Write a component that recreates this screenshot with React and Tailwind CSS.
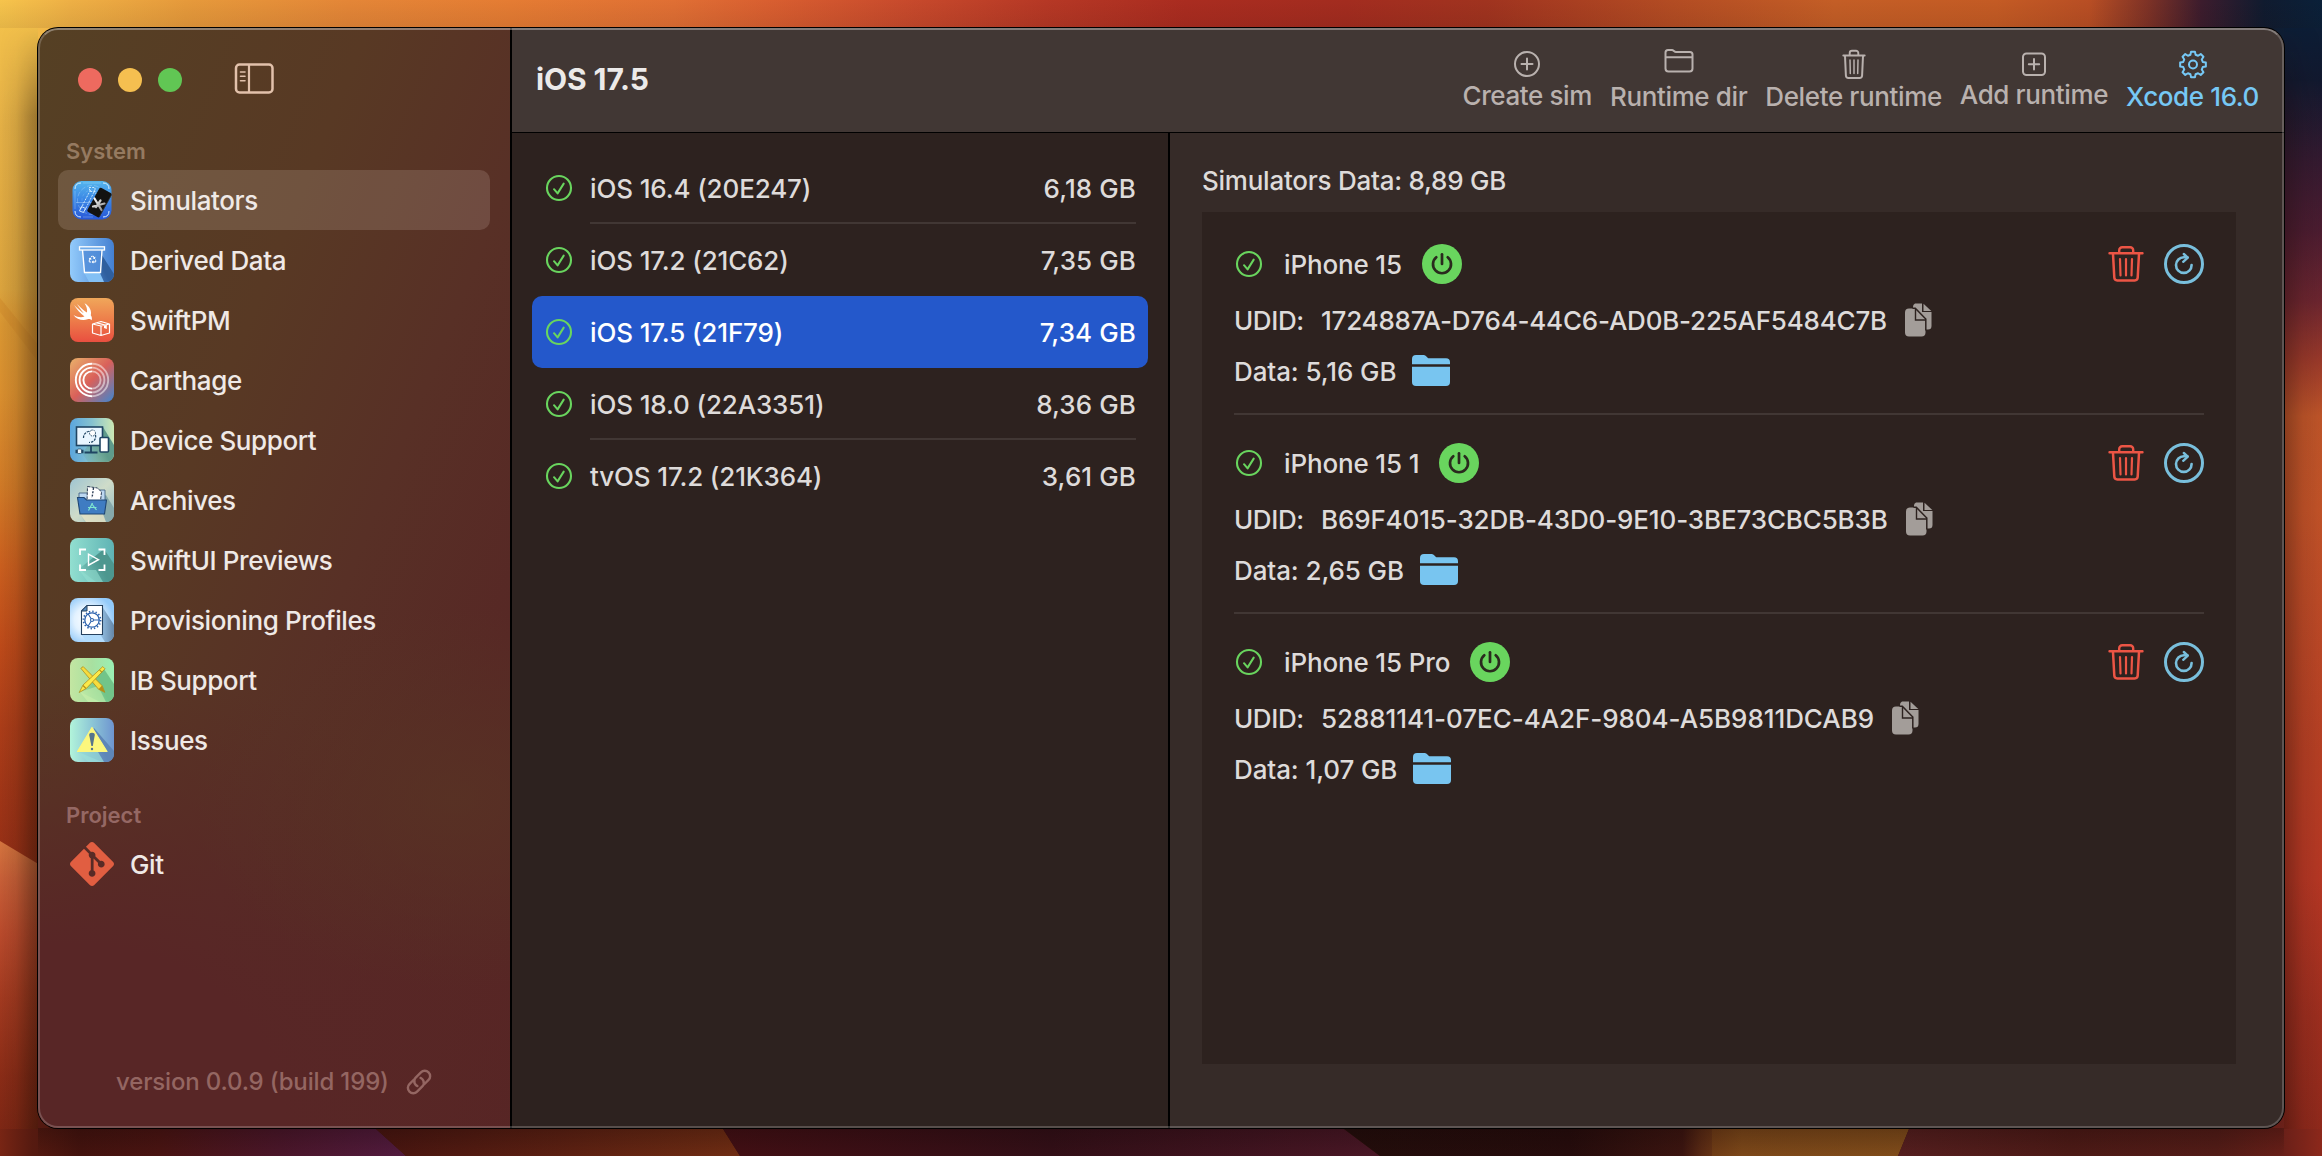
import React from "react";
import { FaRecycle } from "react-icons/fa";
import { SiGit } from "react-icons/si";

/* ---------- Desktop wallpaper ---------- */

function Stops({ list }) {
  return list.map(([o, c, a]) => <stop key={o} offset={o} stopColor={c} stopOpacity={a ?? 1} />);
}

function Wallpaper() {
  return (
    <svg className="absolute inset-0 h-full w-full" viewBox="0 0 2322 1156" preserveAspectRatio="none" aria-hidden="true">
      <defs>
        <linearGradient id="wTop" gradientUnits="userSpaceOnUse" x1="0" y1="0" x2="2322" y2="0">
          <Stops
            list={[
              [0, "#f6c44c"], [0.03, "#eeb045"], [0.08, "#e69a3b"], [0.15, "#e48637"], [0.22, "#e57c33"],
              [0.29, "#e06f34"], [0.33, "#d95f30"], [0.39, "#c84a2c"], [0.45, "#b63825"], [0.51, "#aa2c20"],
              [0.58, "#a32c1f"], [0.64, "#a0331f"], [0.72, "#b34c23"], [0.79, "#c45e26"], [0.86, "#c45b24"],
              [0.9, "#b84e24"], [0.925, "#7e3226"], [0.948, "#3c1c2d"], [0.975, "#101b2f"], [1, "#0a2039"],
            ]}
          />
        </linearGradient>
        <linearGradient id="wLeft" gradientUnits="userSpaceOnUse" x1="0" y1="0" x2="0" y2="1156">
          <Stops
            list={[
              [0, "#f6c44c"], [0.11, "#e4b046"], [0.25, "#dba43e"], [0.28, "#d99632"], [0.34, "#d98f2f"],
              [0.42, "#d07a27"], [0.49, "#ca5f1f"], [0.56, "#bd4a1a"], [0.63, "#ab3d19"], [0.74, "#962f16"], [1, "#6a2110"],
            ]}
          />
        </linearGradient>
        <linearGradient id="wLeftLow" gradientUnits="userSpaceOnUse" x1="0" y1="840" x2="0" y2="1156">
          <Stops list={[[0, "#d5763f"], [0.12, "#c86038"], [0.3, "#b94a2c"], [0.5, "#a23a20"], [0.75, "#8a2c17"], [1, "#782514"]]} />
        </linearGradient>
        <linearGradient id="wLeftShade" x1="0" y1="0" x2="1" y2="0">
          <Stops list={[[0, "#1a0d04", 0], [0.4, "#1a0d04", 0.12], [0.75, "#1a0d04", 0.36], [1, "#1a0d04", 0.5]]} />
        </linearGradient>
        <linearGradient id="wShadeFade" x1="0" y1="0" x2="0" y2="1">
          <Stops list={[[0, "#fff", 0], [0.02, "#fff", 0], [0.1, "#fff", 0.8], [1, "#fff", 1]]} />
        </linearGradient>
        <mask id="wShadeMask">
          <rect width="2322" height="1156" fill="url(#wShadeFade)" />
        </mask>
        <linearGradient id="wRight" gradientUnits="userSpaceOnUse" x1="0" y1="0" x2="0" y2="1156">
          <Stops
            list={[
              [0, "#0a2039"], [0.07, "#12192f"], [0.14, "#341a30"], [0.2, "#4b1c30"], [0.26, "#6b252f"], [0.31, "#97382a"],
              [0.36, "#bd5429"], [0.44, "#c05228"], [0.52, "#bb4a27"], [0.65, "#b53f24"], [0.76, "#b53724"], [0.88, "#9c2e1f"], [1, "#8c281b"],
            ]}
          />
        </linearGradient>
        <linearGradient id="wRightShade" x1="1" y1="0" x2="0" y2="0">
          <Stops list={[[0, "#160805", 0], [0.5, "#160805", 0.1], [1, "#160805", 0.36]]} />
        </linearGradient>
        <linearGradient id="wB1" gradientUnits="userSpaceOnUse" x1="0" y1="0" x2="400" y2="0">
          <Stops list={[[0, "#782514"], [0.08, "#561a10"], [0.2, "#44130e"], [0.4, "#4a1412"], [0.7, "#4b162a"], [1, "#521b3e"]]} />
        </linearGradient>
        <linearGradient id="wB2" gradientUnits="userSpaceOnUse" x1="376" y1="0" x2="740" y2="0">
          <Stops list={[[0, "#481510"], [0.5, "#5c2012"], [1, "#702d13"]]} />
        </linearGradient>
        <linearGradient id="wB3" gradientUnits="userSpaceOnUse" x1="722" y1="0" x2="1380" y2="0">
          <Stops list={[[0, "#430f14"], [0.5, "#330f17"], [1, "#4a1726"]]} />
        </linearGradient>
        <linearGradient id="wB4" gradientUnits="userSpaceOnUse" x1="1345" y1="0" x2="1720" y2="0">
          <Stops list={[[0, "#230d0b"], [0.6, "#260c0c"], [0.9, "#3c1510"], [0.95, "#5a2a14"], [1, "#6f3a16"]]} />
        </linearGradient>
        <linearGradient id="wB5" gradientUnits="userSpaceOnUse" x1="1700" y1="0" x2="1910" y2="0">
          <Stops list={[[0, "#6b3815"], [0.2, "#7d4819"], [1, "#804c1a"]]} />
        </linearGradient>
        <linearGradient id="wB6" gradientUnits="userSpaceOnUse" x1="1900" y1="0" x2="2322" y2="0">
          <Stops list={[[0, "#561f1f"], [0.4, "#4d1a16"], [0.75, "#531c17"], [0.9, "#671f18"], [1, "#8c281b"]]} />
        </linearGradient>
        <linearGradient id="wBotShade" x1="0" y1="0" x2="0" y2="1">
          <Stops list={[[0, "#0c0404", 0.25], [1, "#0c0404", 0]]} />
        </linearGradient>
        <linearGradient id="wTopShade" x1="0" y1="0" x2="0" y2="1">
          <Stops list={[[0, "#1a0804", 0], [1, "#1a0804", 0.08]]} />
        </linearGradient>
      </defs>
      <rect width="60" height="1156" fill="url(#wLeft)" />
      <path d="M0 298 60 372V390L0 312Z" fill="#cf8a2b" opacity=".55" />
      <path d="M0 841 60 877V1156H0Z" fill="url(#wLeftLow)" />
      <g mask="url(#wShadeMask)">
        <rect width="40" height="1156" fill="url(#wLeftShade)" />
      </g>
      <rect x="2262" width="60" height="1156" fill="url(#wRight)" />
      <g mask="url(#wShadeMask)">
        <rect x="2284" width="38" height="1156" fill="url(#wRightShade)" />
      </g>
      <rect width="2322" height="28" fill="url(#wTop)" />
      <rect x="38" y="28" width="2246" height="24" fill="url(#wTop)" />
      <rect width="2322" height="28" fill="url(#wTopShade)" />
      <path d="M38 1110H376V1129L406 1156H0V1129H38Z" fill="url(#wB1)" />
      <path d="M376 1110H723V1129L740 1156H406L376 1129Z" fill="url(#wB2)" />
      <path d="M723 1110H1344V1129L1380 1156H740L723 1129Z" fill="url(#wB3)" />
      <path d="M1344 1110H1713V1156H1380L1344 1129Z" fill="url(#wB4)" />
      <path d="M1712 1110H1910L1909 1129 1898 1156H1712Z" fill="url(#wB5)" />
      <path d="M1909 1110H2284V1129H2322V1156H1898L1909 1129Z" fill="url(#wB6)" />
      <rect x="38" y="1128" width="2246" height="28" fill="url(#wBotShade)" />
    </svg>
  );
}

/* ---------- Sidebar icons (44 x 44 tiles) ---------- */

function Tile({ id, from, to, x2 = 1, y2 = 1, mid, shadow, shadowColor, children }) {
  return (
    <svg width="44" height="44" viewBox="0 0 44 44" aria-hidden="true">
      <defs>
        <linearGradient id={id} x1="0" y1="0" x2={x2} y2={y2}>
          <stop offset="0" stopColor={from} />
          {mid && <stop offset=".5" stopColor={mid} />}
          <stop offset="1" stopColor={to} />
        </linearGradient>
        <linearGradient id={id + "S"} x1="0" y1="1" x2="1" y2=".5">
          <stop offset="0" stopColor={shadowColor || "#000"} stopOpacity="0" />
          <stop offset=".7" stopColor={shadowColor || "#000"} stopOpacity="1" />
        </linearGradient>
        <clipPath id={id + "C"}>
          <rect width="44" height="44" rx="8" />
        </clipPath>
      </defs>
      <g clipPath={"url(#" + id + "C)"}>
        <rect width="44" height="44" fill={"url(#" + id + ")"} />
        {shadow && <path d={shadow} fill={"url(#" + id + "S)"} />}
        {children}
      </g>
    </svg>
  );
}

function SimulatorsIcon() {
  return (
    <svg width="44" height="44" viewBox="0 0 44 44" className="overflow-visible" aria-hidden="true">
      <defs>
        <linearGradient id="simBg" x1="0" y1="0" x2="0" y2="1">
          <stop offset="0" stopColor="#55b6ee" />
          <stop offset=".45" stopColor="#3c8ae6" />
          <stop offset="1" stopColor="#2858d8" />
        </linearGradient>
        <linearGradient id="simX" gradientUnits="userSpaceOnUse" x1="23" y1="21" x2="33" y2="32">
          <stop offset="0" stopColor="#fff" />
          <stop offset="1" stopColor="#8f8f8f" />
        </linearGradient>
      </defs>
      <rect x="2.5" y="3" width="39" height="38.5" rx="9" fill="url(#simBg)" />
      <g fill="none" stroke="#d9f0ff">
        <path d="M5 11q0-6 6-6M33 5q6 0 6 6M5 33q0 6 6 6M33 39q6 0 6-6" strokeWidth="1" />
        <path d="M5 13v18M13 5h18M13 39h10M39 13v5" strokeWidth=".7" opacity=".4" />
        <circle cx="22" cy="22" r="14.5" strokeWidth=".8" opacity=".35" strokeDasharray="5 2" />
        <circle cx="22" cy="22" r="10" strokeWidth=".7" opacity=".25" strokeDasharray="3 2" />
        <path d="M20.5 12 10 32M24 14 15 32M19 9.5h6v4h-5zM24 12l5 9" strokeWidth=".9" strokeDasharray="2 1.2" />
        <path d="M6 24.500h24" strokeWidth=".7" opacity=".5" />
        <path d="m11.500 28.500-2 4.500 4 1.500 2-4z" strokeWidth=".9" />
      </g>
      <g transform="rotate(29 29.500 24.500)">
        <rect x="22.500" y="10.800" width="14" height="27.500" rx="1.800" fill="#131211" />
        <path d="M36.300 12.500v24" stroke="#3b3a39" strokeWidth=".6" />
      </g>
      <path d="M24.500 20.500 31.500 32M34.500 25.500 23 28.500M30.500 22.500 26 29" stroke="url(#simX)" strokeWidth="2.200" strokeLinecap="round" />
    </svg>
  );
}

const DerivedDataIcon = () => (
  <Tile id="dd" from="#93cbfb" to="#4480d2" y2={0} shadow="M30 14 44 36V44H19L14 35H31Z" shadowColor="#2f5f9e">
    <path d="M14 35H30L34 44H19Z" fill="#83c0f5" />
    <path d="M12.500 12 14.500 34.500H30.500L32 12" fill="#4c88d6" fillOpacity=".7" stroke="#fff" strokeWidth="1.400" />
    <rect x="9.500" y="8.800" width="25" height="3.200" fill="#6fabea" stroke="#fff" strokeWidth="1.300" />
    <FaRecycle x={18.500} y={17.500} size={8} color="#fff" />
  </Tile>
);

const SwiftPMIcon = () => (
  <Tile id="sp" from="#f0a75a" mid="#ed7d4a" to="#e94f40" x2={0}>
    <path
      transform="translate(3 3)"
      d="M1 4C5 8 8.500 10.800 10.800 12.300 8 9 5.500 5.500 4 3 8 7 11.500 10 14 11.600 14.500 8.500 13.500 5 11.500 2.300 16.500 5 19 10 17.800 14.200 19 16 19.300 18 18.500 19.300 17.500 17.800 16 17.600 14.500 18.300 10 20.300 3.500 18.500.500 14 4.500 16.300 8.500 16.800 11.500 15.500 7.500 12.500 3.500 8 1 4Z"
      fill="#fff"
    />
    <g fill="none" stroke="#fff" strokeWidth="1.200" strokeLinejoin="round">
      <path d="M22.500 26 31 28V37.500L22.500 35ZM31 28 39.500 26V35L31 37.500ZM22.500 26 31 23.500 39.500 26M27 24.800 35 27" />
    </g>
    <path d="M34 27.600 36.800 27V31L34 30Z" fill="#fff" />
  </Tile>
);

const CarthageIcon = () => (
  <Tile id="ca" from="#eab16a" mid="#d9605a" to="#3f86d0">
    <g fill="none" strokeWidth="1.900">
      {[16.200, 12.400, 8.600].map((r) => (
        <React.Fragment key={r}>
          <path d={`M22 ${22 - r}A${r} ${r} 0 0 0 22 ${22 + r}`} stroke="#fff" />
          <path d={`M22 ${22 - r}A${r} ${r} 0 0 1 22 ${22 + r}`} stroke="#fff" strokeOpacity=".5" />
        </React.Fragment>
      ))}
    </g>
  </Tile>
);

const DeviceSupportIcon = () => (
  <Tile id="ds" from="#5ba6de" mid="#86c2cf" to="#cce8b4" y2={0} shadow="M33 9 44 27V44H18L12 35Z" shadowColor="#5f9b8b">
    <rect x="6.500" y="9" width="26" height="18.500" fill="#e9f6ff" stroke="#1f4563" strokeWidth="1.600" />
    <path d="M21 28v6M14.500 34.500h13" stroke="#1f4563" strokeWidth="1.800" />
    <path d="M13.500 20c0-5 4-7 8-7M25.500 17c1 4-2 7.500-6.500 7.500" fill="none" stroke="#1f4563" strokeWidth="1.200" strokeDasharray="2.500 1" />
    <circle cx="22.500" cy="15" r="3" fill="#fff" stroke="#1f4563" strokeWidth="1" strokeDasharray="1.500 1" />
    <rect x="30" y="19.500" width="8.500" height="14.500" rx="1" fill="#fff" stroke="#1f4563" strokeWidth="1.600" />
    <path d="M5.500 33.500h8" stroke="#1f4563" strokeWidth="3.600" />
    <rect x="7.500" y="31" width="4" height="4.500" rx="1" fill="#f3fbff" stroke="#1f4563" strokeWidth=".7" />
  </Tile>
);

const ArchivesIcon = () => (
  <Tile id="ar" from="#9ec4d2" mid="#cfdcc9" to="#93bcc4" shadow="M36 17 44 30V44H14L10 35Z" shadowColor="#86a9ab">
    <path d="M10 36H33L36 44H16Z" fill="#e9e5c6" opacity=".8" />
    <path d="M9 20V15h9v-3h17v12H9z" fill="#bcd7f0" stroke="#35567c" strokeWidth=".8" />
    <path d="m17.500 8.500 10 1.500 4 4-1 9H17z" fill="#fff" stroke="#2b3c55" strokeWidth="1" strokeDasharray="3 1" />
    <path d="m23.500 10-1.500 10" stroke="#2b3c55" strokeWidth="1.400" strokeDasharray="2 1.300" />
    <path d="M7.500 19.500h6.500l2.500 2.500h20L34.500 36H10Z" fill="#3f7cc2" stroke="#1f4674" strokeWidth="1.100" />
    <path d="M22.500 25 18.500 32.500M21.500 25.500 26.500 32M18 29.500h8.500" stroke="#7fe8d0" strokeWidth="1.200" />
  </Tile>
);

const PreviewsIcon = () => (
  <Tile id="pv" from="#92dfd0" to="#5fb3b4" y2={0} shadow="M34 11 44 26V44H26L9 31Z" shadowColor="#4d978f">
    <path d="M9 32H26L33 44H18Z" fill="#94e0d0" opacity=".6" />
    <g fill="none" stroke="#fff" strokeWidth="1.800">
      <path d="M10 17v-5.500h6M28.500 11.500h6V17M34.500 26.500V32h-6M16 32h-6v-5.500" />
      <path d="M18.500 16.200v11L28.500 21.700Z" strokeWidth="1.400" />
    </g>
  </Tile>
);

const ProfilesIcon = () => (
  <svg width="44" height="44" viewBox="0 0 44 44" aria-hidden="true">
    <defs>
      <radialGradient id="pp" cx=".4" cy=".5" r=".6">
        <stop offset="0" stopColor="#fff" />
        <stop offset=".5" stopColor="#e3f2ff" />
        <stop offset="1" stopColor="#93caf9" />
      </radialGradient>
      <linearGradient id="ppS" x1="0" y1="0" x2="1" y2="0">
        <stop offset=".5" stopColor="#9fcdf2" />
        <stop offset="1" stopColor="#6587a8" />
      </linearGradient>
      <clipPath id="ppC">
        <rect width="44" height="44" rx="8" />
      </clipPath>
    </defs>
    <g clipPath="url(#ppC)">
      <rect width="44" height="44" fill="url(#pp)" />
      <path d="M32 8 44 27V44H18L11 36Z" fill="url(#ppS)" />
      <path d="M11 36H30L35 44H17Z" fill="#b3dcfc" />
      <path d="M17 7.500H32.500V36.500H11.500V13Z" fill="#fff" stroke="#27425f" strokeWidth="1.100" />
      <path d="M17 7.500V13H11.500Z" fill="#5b8fc4" stroke="#27425f" strokeWidth="1" />
      <circle cx="22" cy="22" r="7.200" fill="none" stroke="#2c62ad" strokeWidth="1.300" />
      <circle cx="22" cy="22" r="8.600" fill="none" stroke="#2c62ad" strokeWidth="1.700" strokeDasharray="1.400 1.976" />
      <circle cx="22" cy="22" r="1.500" fill="none" stroke="#2c62ad" strokeWidth="1.100" />
      <path d="M23.500 22h6M21.200 20.700l-3.200-5M21.200 23.300l-3.200 5" stroke="#2c62ad" strokeWidth="1.100" />
    </g>
  </svg>
);

const IBIcon = () => (
  <Tile id="ib" from="#c3e6a2" mid="#a8e0a0" to="#9af0b4" y2={0} shadow="M34 11 44 26V44H30L10 34Z" shadowColor="#72c489">
    <path d="M10 34 28 28 36 44H18Z" fill="#d4f5b0" opacity=".5" />
    <g strokeLinejoin="round">
      <path d="M10.800 10.300 13.200 8.600 32 27.500 34.800 34.300 28.500 31.200Z" fill="#f6dc3d" stroke="#a88416" strokeWidth=".7" />
      <path d="m28.500 31.200 3.500-3.700 2.800 6.800z" fill="#b58f1a" />
      <path d="M32.800 8.600 35 10.800 16.500 30.300 9.200 34.500 13 27Z" fill="#fbe949" stroke="#a88416" strokeWidth=".7" />
      <path d="m29.500 11.800 2.500 2.500M13 27.500l3 3" stroke="#b58f1a" strokeWidth="1.100" />
    </g>
  </Tile>
);

const IssuesIcon = () => (
  <Tile id="is" from="#b2f4da" mid="#8cc6d6" to="#6e95d0" y2={0} shadow="M24 10 44 33V44H32L8 34Z" shadowColor="#5e86b8">
    <path d="M8 34H28L34 44H18Z" fill="#9adfd8" opacity=".7" />
    <path d="M22 9.500 37 33.500H7.500Z" fill="#fcf77d" stroke="#fcf77d" strokeWidth="1.200" strokeLinejoin="round" />
    <path d="M19.200 17q0-2.200 2.800-2.200t2.800 2.200L22.800 28h-1.400Z" fill="#56748c" />
    <circle cx="22" cy="31" r="1.200" fill="#56748c" />
  </Tile>
);

const GitIcon = () => <SiGit size={44} color="#e15e41" />;

/* ---------- Glyphs ---------- */

const SidebarToggle = () => (
  <svg width="40" height="32" viewBox="0 0 40 32" fill="none" stroke="#e2c1ab" aria-hidden="true">
    <rect x="2" y="1.500" width="36.500" height="28" rx="3.500" strokeWidth="2.500" />
    <path d="M15 2v27" strokeWidth="2.200" />
    <path d="M6.500 9H11M6.500 13.300H11M6.500 17.700H11" strokeWidth="1.600" strokeLinecap="round" />
  </svg>
);

const LinkGlyph = () => (
  <svg width="26" height="26" viewBox="-13 -13 26 26" fill="none" stroke="currentColor" strokeWidth="2.400" strokeLinecap="round" aria-hidden="true">
    <g transform="rotate(-45)">
      <path d="M-2.500-5.300H-8.200A5.400 5.400 0 0 0-8.200 5.500H-.800A5.400 5.400 0 0 0 4 2.200 5.400 5.400 0 0 0 4-1.800" />
      <path d="M2.500 5.300H8.200A5.400 5.400 0 0 0 8.200-5.500H.800A5.400 5.400 0 0 0-4-2.200 5.400 5.400 0 0 0-4 1.800" />
    </g>
  </svg>
);

const CheckCircle = () => (
  <svg width="30" height="30" viewBox="0 0 30 30" fill="none" stroke="#69d55e" strokeLinecap="round" strokeLinejoin="round" aria-hidden="true">
    <circle cx="15" cy="15" r="12" strokeWidth="2.100" />
    <path d="m10 16.200 3.600 4.200 6.100-9.800" strokeWidth="2" />
  </svg>
);

const PowerIcon = () => (
  <svg width="40" height="40" viewBox="0 0 40 40" fill="none" aria-hidden="true">
    <circle cx="20" cy="20" r="20" fill="#69d55e" />
    <path d="M14.300 13.300A9 9 0 1 0 25.700 13.300" stroke="#2a2a1e" strokeWidth="2.700" strokeLinecap="round" />
    <path d="M20 10.300v9.700" stroke="#2a2a1e" strokeWidth="2.700" strokeLinecap="round" />
  </svg>
);

const CopyIcon = () => (
  <svg width="27" height="34" viewBox="0 0 27 34" aria-hidden="true">
    <path d="M10 .5h7v8.500h9.500v14a3.500 3.500 0 0 1-3.500 3.500H8V4a3.500 3.500 0 0 1 2-3.500z" fill="#a39d99" />
    <path d="M18.500.8 26.300 8h-7.800z" fill="#a39d99" />
    <path d="M4 5.500h6l10.500 10.700V29.500a4 4 0 0 1-4 4H4a4 4 0 0 1-4-4v-20a4 4 0 0 1 4-4z" fill="#a39d99" />
    <path d="M7.500 5.300h2.800L20.800 16v11.500" fill="none" stroke="#2d221f" strokeWidth="1.500" />
    <path d="M10.500 6v11h10.500" fill="none" stroke="#2d221f" strokeWidth="1.400" />
  </svg>
);

const FolderFill = () => (
  <svg width="38" height="31" viewBox="0 0 38 31" fill="#78c5f0" aria-hidden="true">
    <path d="M0 9.300V4a4 4 0 0 1 4-4h7.200c1.400 0 2.200.5 3.200 1.500l1 .9c.8.600 1.200.8 2.200.8H34a4 4 0 0 1 4 4v2.100z" />
    <path d="M0 11.800h38V27a4 4 0 0 1-4 4H4a4 4 0 0 1-4-4z" />
  </svg>
);

const TrashRed = () => (
  <svg width="36" height="36" viewBox="0 0 36 36" fill="none" stroke="#ec5545" strokeLinecap="round" strokeLinejoin="round" aria-hidden="true">
    <path d="M1.500 7.200h33M11.200 7V4.300a3 3 0 0 1 3-3h8a3 3 0 0 1 3 3V7" strokeWidth="2.400" />
    <path d="m5 8 1.300 23.500a3 3 0 0 0 3 2.900h17.400a3 3 0 0 0 3-2.900L31 8" strokeWidth="2.500" />
    <path d="m12 13 .5 16.500M18 13v16.500M24 13l-.5 16.500" strokeWidth="2.200" />
  </svg>
);

const RefreshIcon = () => (
  <svg width="40" height="40" viewBox="0 0 40 40" fill="none" stroke="#79bfdc" strokeLinecap="round" strokeLinejoin="round" aria-hidden="true">
    <circle cx="20" cy="20" r="18.500" strokeWidth="3" />
    <path d="M27.600 21A7.800 7.800 0 1 1 20 13.300h3.300" strokeWidth="2.600" />
    <path d="m19.800 10 4 3.600-4.600 4.200" strokeWidth="2.400" />
  </svg>
);

const CreateGlyph = () => (
  <svg width="34" height="34" viewBox="0 0 34 34" fill="none" stroke="#b9b1ae" strokeLinecap="round" aria-hidden="true">
    <circle cx="17" cy="17" r="12" strokeWidth="2" />
    <path d="M17 11.500v11M11.500 17h11" strokeWidth="2" />
  </svg>
);

const RuntimeDirGlyph = () => (
  <svg width="34" height="34" viewBox="0 0 34 34" fill="none" stroke="#b9b1ae" strokeWidth="2" strokeLinejoin="round" aria-hidden="true">
    <path d="M3.500 21.500V5.500a2.500 2.500 0 0 1 2.500-2.500h4c1.600 0 2.200 2 4 2h14a2.500 2.500 0 0 1 2.500 2.500v14a3 3 0 0 1-3 3h-21a3 3 0 0 1-3-3zM3.500 10.300h27" />
  </svg>
);

const DeleteGlyph = () => (
  <svg width="34" height="34" viewBox="0 0 34 34" fill="none" stroke="#b9b1ae" strokeLinecap="round" strokeLinejoin="round" aria-hidden="true">
    <path d="M6.300 8.500h21.400M12.700 8V6a2.300 2.300 0 0 1 2.300-2.300h4A2.300 2.300 0 0 1 21.300 6v2" strokeWidth="1.900" />
    <path d="M8 9l.9 19.500A2.600 2.600 0 0 0 11.500 31h11a2.600 2.600 0 0 0 2.600-2.500L26 9" strokeWidth="2" />
    <path d="m13 13 .3 13.500M17 13v13.500M21 13l-.3 13.500" strokeWidth="1.500" />
  </svg>
);

const AddGlyph = () => (
  <svg width="34" height="34" viewBox="0 0 34 34" fill="none" stroke="#b9b1ae" strokeLinecap="round" aria-hidden="true">
    <rect x="6" y="6.500" width="22" height="21.500" rx="3.500" strokeWidth="2" />
    <path d="M17 12v10.500M11.800 17.200h10.400" strokeWidth="2" />
  </svg>
);

const gearPath = (() => {
  const pts = [];
  for (let i = 0; i < 8; i++) {
    const base = (i * Math.PI) / 4 - Math.PI / 2;
    [[-0.26, 10.100], [-0.15, 13], [0.15, 13], [0.26, 10.100]].forEach(([a, r]) =>
      pts.push(`${(17 + r * Math.cos(base + a)).toFixed(2)} ${(17.500 + r * Math.sin(base + a)).toFixed(2)}`)
    );
  }
  return "M" + pts.join("L") + "Z";
})();

const GearGlyph = () => (
  <svg width="34" height="34" viewBox="0 0 34 34" fill="none" stroke="#76c8f5" strokeWidth="2" strokeLinejoin="round" aria-hidden="true">
    <path d={gearPath} />
    <circle cx="17" cy="17.500" r="4" />
  </svg>
);

/* ---------- Data ---------- */

const systemItems = [
  ["Simulators", SimulatorsIcon],
  ["Derived Data", DerivedDataIcon],
  ["SwiftPM", SwiftPMIcon],
  ["Carthage", CarthageIcon],
  ["Device Support", DeviceSupportIcon],
  ["Archives", ArchivesIcon],
  ["SwiftUI Previews", PreviewsIcon],
  ["Provisioning Profiles", ProfilesIcon],
  ["IB Support", IBIcon],
  ["Issues", IssuesIcon],
];

const runtimes = [
  { name: "iOS 16.4 (20E247)", size: "6,18 GB", line: true },
  { name: "iOS 17.2 (21C62)", size: "7,35 GB" },
  { name: "iOS 17.5 (21F79)", size: "7,34 GB", selected: true },
  { name: "iOS 18.0 (22A3351)", size: "8,36 GB", line: true },
  { name: "tvOS 17.2 (21K364)", size: "3,61 GB" },
];

const devices = [
  { name: "iPhone 15", udid: "1724887A-D764-44C6-AD0B-225AF5484C7B", data: "5,16 GB", fit: "tracking-[-0.22px]" },
  { name: "iPhone 15 1", udid: "B69F4015-32DB-43D0-9E10-3BE73CBC5B3B", data: "2,65 GB", fit: "tracking-[-0.14px]" },
  { name: "iPhone 15 Pro", udid: "52881141-07EC-4A2F-9804-A5B9811DCAB9", data: "1,07 GB", fit: "tracking-[-0.06px]" },
];

const actions = [
  { label: "Create sim", Icon: CreateGlyph, text: "mt-[2px] text-[#b9b1ae]" },
  { label: "Runtime dir", Icon: RuntimeDirGlyph, text: "mt-[3px] text-[#b9b1ae]" },
  { label: "Delete runtime", Icon: DeleteGlyph, text: "mt-[3px] text-[#b9b1ae]" },
  { label: "Add runtime", Icon: AddGlyph, text: "mt-[1px] text-[#b9b1ae]" },
  { label: "Xcode 16.0", Icon: GearGlyph, text: "mt-[3px] text-[#76c8f5]" },
];

/* ---------- Panels ---------- */

function SidebarRow({ label, Icon, selected }) {
  return (
    <div className={"mx-5 flex h-[60px] items-center rounded-[10px] pl-3 " + (selected ? "bg-[#ffe8e0]/15" : "")}>
      <Icon />
      <span className="ml-4 pt-0.5 tracking-[-0.4px] text-[#efe9e6]">{label}</span>
    </div>
  );
}

function Sidebar() {
  return (
    <aside className="flex w-[474px] shrink-0 flex-col border-r-2 border-black bg-[radial-gradient(ellipse_260px_190px_at_88%_70%,rgba(88,52,36,0.75),transparent),radial-gradient(ellipse_520px_460px_at_8%_100%,rgba(88,38,38,1)_40%,transparent),linear-gradient(112deg,#554024_0%,#583924_36%,#583026_58%,#572825_78%,#572524_100%)]">
      <div className="flex h-[104px] items-center pl-10">
        <div className="flex gap-4">
          <span className="size-6 rounded-full bg-[#ee6a5f]" />
          <span className="size-6 rounded-full bg-[#f5bf50]" />
          <span className="size-6 rounded-full bg-[#61c654]" />
        </div>
        <div className="mb-[3px] ml-[52px]">
          <SidebarToggle />
        </div>
      </div>
      <div className="flex h-[38px] items-center pl-7 text-[22px] font-semibold text-[#957a60]">System</div>
      {systemItems.map(([label, Icon], i) => (
        <SidebarRow key={label} label={label} Icon={Icon} selected={i === 0} />
      ))}
      <div className="mt-[26px] flex h-[38px] items-center pl-7 text-[22px] font-semibold text-[#956864]">Project</div>
      <SidebarRow label="Git" Icon={GitIcon} />
      <div className="mt-auto mb-[31px] flex h-[30px] items-center pl-[78px] text-[24px] tracking-[-0.15px] text-[#946662]">
        <span>version 0.0.9 (build 199)</span>
        <span className="ml-[17px]">
          <LinkGlyph />
        </span>
      </div>
    </aside>
  );
}

function Toolbar() {
  return (
    <header className="flex h-[105px] shrink-0 justify-between border-b border-black bg-[#413734] pr-[25px] pl-6">
      <h1 className="mt-[33px] text-[30px] leading-[36px] font-bold tracking-[-0.1px] text-[#eceae9]">iOS 17.5</h1>
      <div className="flex gap-[18px] pt-[19px]">
        {actions.map(({ label, Icon, text }) => (
          <div key={label} className="flex flex-col items-center tracking-[-0.38px]">
            <Icon />
            <span className={"leading-[26px] " + text}>{label}</span>
          </div>
        ))}
      </div>
    </header>
  );
}

function RuntimeList() {
  return (
    <section className="w-[658px] shrink-0 border-r-2 border-black bg-[#2d221f] px-5 pt-[19px]">
      {runtimes.map((r) => (
        <div
          key={r.name}
          className={"flex h-[72px] items-center rounded-[10px] pl-3 " + (r.selected ? "bg-[#2458cb] text-white" : "text-[#dedbda]")}
        >
          <CheckCircle />
          <div
            className={
              "mr-3 ml-4 flex h-full flex-1 items-center justify-between border-y-2 border-t-transparent " +
              (r.line ? "border-b-[#413734]" : "border-b-transparent")
            }
          >
            <span className="pt-0.5 tracking-[-0.14px]">{r.name}</span>
            <span className="pt-0.5 tracking-[0.1px]">{r.size}</span>
          </div>
        </div>
      ))}
    </section>
  );
}

function DeviceRow({ device, last }) {
  return (
    <div className={"h-[199px] border-b-2 pt-7 " + (last ? "border-transparent" : "border-[#413734]")}>
      <div className="flex h-10 items-center">
        <CheckCircle />
        <span className="ml-5 pt-0.5 tracking-[-0.15px]">{device.name}</span>
        <span className="ml-5">
          <PowerIcon />
        </span>
        <div className="ml-auto flex items-center gap-5">
          <TrashRed />
          <RefreshIcon />
        </div>
      </div>
      <div className="mt-[19px] flex h-[35px] items-center">
        <span className="w-[87px] tracking-[-0.4px]">UDID:</span>
        <span className={device.fit}>{device.udid}</span>
        <span className="-mt-0.5 ml-[18px]">
          <CopyIcon />
        </span>
      </div>
      <div className="mt-[18px] flex h-[31px] items-center">
        <span className="tracking-[-0.1px]">Data: {device.data}</span>
        <span className="-mt-0.5 ml-4">
          <FolderFill />
        </span>
      </div>
    </div>
  );
}

function DevicePanel() {
  return (
    <section className="flex-1 bg-[#362b28] pr-12 pb-16 pl-8 text-[#dedbda]">
      <div className="flex h-[79px] items-center pt-4 tracking-[-0.25px]">Simulators Data: 8,89 GB</div>
      <div className="h-[852px] bg-[#2d221f] px-8 pt-1">
        {devices.map((d, i) => (
          <DeviceRow key={d.udid} device={d} last={i === devices.length - 1} />
        ))}
      </div>
    </section>
  );
}

export default function App() {
  return (
    <div className="relative h-[1156px] w-[2322px] overflow-hidden bg-[#3c110c] pt-7 pl-[38px] font-['Inter',sans-serif] text-[26px] leading-none font-[450] whitespace-nowrap">
      <Wallpaper />
      <div className="relative h-[1100px] w-[2246px] overflow-hidden rounded-[20px] bg-[#362b28] shadow-[0_0_0_1px_#000]">
        <div className="flex h-full">
          <Sidebar />
          <div className="flex min-w-0 flex-1 flex-col">
            <Toolbar />
            <div className="flex min-h-0 flex-1">
              <RuntimeList />
              <DevicePanel />
            </div>
          </div>
        </div>
        <div className="pointer-events-none absolute inset-0 rounded-[20px] border-2 border-x-white/20 border-t-white/35 border-b-white/20" />
      </div>
    </div>
  );
}
